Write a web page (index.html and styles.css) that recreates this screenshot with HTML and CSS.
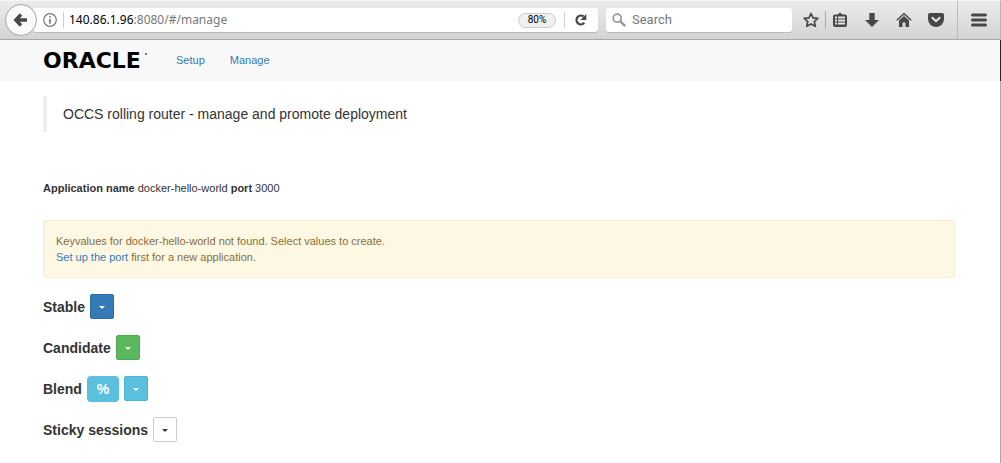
FILE: index.html
```html
<!DOCTYPE html>
<html lang="en">
<head>
<meta charset="utf-8">
<title>OCCS rolling router</title>
<link rel="stylesheet" href="styles.css">
</head>
<body>
<div class="toolbar">
  <button class="back" aria-label="Back"><svg width="16" height="16" viewBox="0 0 16 16"><path d="M8 2.5 2.8 8 8 13.5M3 8h11" fill="none" stroke="#484848" stroke-width="3.4"/></svg></button>
  <div class="address">
    <button class="plain info" aria-label="Site information"><svg width="14" height="14" viewBox="0 0 14 14" fill="none" stroke="#777"><circle cx="7" cy="7" r="6.3" stroke-width="1.2"/><path d="M7 6v4.7M7 3.2v1.6" stroke-width="1.6"/></svg></button>
    <span class="rule"></span>
    <div class="url" role="textbox" aria-label="Address" contenteditable="true" spellcheck="false"><b>140.86.1.96</b>:8080/#/manage</div>
    <button class="zoom">80%</button>
    <span class="rule"></span>
    <button class="plain reload" aria-label="Reload"><svg width="14" height="14" viewBox="0 0 14 14"><path d="M10.3 9.8A4.4 4.4 0 1 1 9.6 3.5" fill="none" stroke="#484848" stroke-width="2.3"/><path d="M12.3 1v6H6.4z" fill="#484848"/></svg></button>
  </div>
  <label class="search">
    <svg width="14" height="14" viewBox="0 0 14 14" fill="none" stroke="#999"><circle cx="5.2" cy="5.2" r="4" stroke-width="1.8"/><path d="m8.2 8.2 5 5" stroke-width="2.4"/></svg>
    <input type="text" placeholder="Search" aria-label="Search">
  </label>
  <div class="tools">
    <button class="plain star" aria-label="Bookmark"><svg width="16" height="16" viewBox="0 0 16 16"><path d="m8 1.5 2 4.4 4.8.5-3.5 3.2 1 4.7L8 12l-4.3 2.3 1-4.700L1.200 6.400 6 5.900z" fill="none" stroke="#484848" stroke-width="1.700" stroke-linejoin="round"/></svg></button>
    <span class="rule"></span>
    <button class="plain" aria-label="Bookmarks list"><svg width="16" height="16" viewBox="0 0 16 16"><path d="M3 2.500h2.500L8 .5l2.500 2H13q2 0 2 2V13q0 2-2 2H3q-2 0-2-2V4.500q0-2 2-2z" fill="#484848"/><path d="M3 5.500h2M6 5.500h7M3 8.500h2M6 8.500h7M3 11.500h2M6 11.500h7" stroke="#e4e4e4" stroke-width="1.800"/></svg></button>
    <button class="plain" aria-label="Downloads"><svg width="16" height="16" viewBox="0 0 16 16"><path d="M5.300 1h5.400v7H15l-7 7-7-7h4.300z" fill="#484848"/></svg></button>
    <button class="plain" aria-label="Home"><svg width="16" height="16" viewBox="0 0 16 16"><path d="M.8 8.300 8 1.800l7.200 6.500" fill="none" stroke="#484848" stroke-width="1.500"/><path d="M3 8.500 8 4l5 4.500V15H9.500v-4.500h-3V15H3z" fill="#484848"/></svg></button>
    <button class="plain" aria-label="Pocket"><svg width="16" height="16" viewBox="0 0 16 16"><path d="M2 1h12q2 0 2 2v4a8 8 0 0 1-16 0V3q0-2 2-2z" fill="#484848"/><path d="m4.400 5.800 3.600 3.500 3.600-3.500" fill="none" stroke="#e4e4e4" stroke-width="2" stroke-linecap="round" stroke-linejoin="round"/></svg></button>
  </div>
  <button class="plain menu" aria-label="Menu"><svg width="16" height="14" viewBox="0 0 16 14"><path d="M1.500 2h13M1.500 7h13M1.500 12h13" stroke="#484848" stroke-width="3" stroke-linecap="round"/></svg></button>
</div>
<nav class="nav">
  <svg class="logo" width="107" height="32" viewBox="0 0 107 32" role="img" aria-label="Oracle"><text class="wordmark" x="0" y="23">ORACLE</text><circle cx="103" cy="9" r="1" fill="#555"/></svg>
  <a href="#/setup">Setup</a>
  <a href="#/manage">Manage</a>
</nav>
<main class="page">
  <blockquote class="lead">OCCS rolling router - manage and promote deployment</blockquote>
  <p class="app"><b>Application name</b> docker-hello-world <b>port</b> 3000</p>
  <div class="alert">Keyvalues for docker-hello-world not found. Select values to create.<br><a href="#/setup">Set up the port</a> first for a new application.</div>
  <div class="settings">
    <div class="row"><h4>Stable</h4><button class="drop primary" aria-label="Stable options"><span class="caret"></span></button></div>
    <div class="row"><h4>Candidate</h4><button class="drop success" aria-label="Candidate options"><span class="caret"></span></button></div>
    <div class="row"><h4>Blend</h4><span class="percent">%</span><button class="drop cyan" aria-label="Blend options"><span class="caret"></span></button></div>
    <div class="row"><h4>Sticky sessions</h4><button class="drop" aria-label="Sticky sessions options"><span class="caret"></span></button></div>
  </div>
</main>
</body>
</html>
```
FILE: styles.css
```css
* { box-sizing: border-box; }
body {
  margin: 0;
  min-height: 100vh;
  display: flex;
  flex-direction: column;
  background: #fff;
  color: #333;
  font: 11px/16px "Liberation Sans", Arial, sans-serif;
}
a { color: #337ab7; text-decoration: none; }
button { font: inherit; padding: 0; cursor: pointer; }
svg { display: block; flex: none; }

.toolbar {
  display: flex;
  align-items: center;
  height: 40px;
  padding-left: 5px;
  background: linear-gradient(#ececec, #d3d3d3);
  border-top: 1px solid #f5f5f5;
  border-bottom: 1px solid #a9a9a9;
  border-right: 1px solid #b5b5b5;
}
.plain {
  display: flex;
  align-items: center;
  justify-content: center;
  border: 0;
  background: none;
}
.back {
  position: relative;
  display: flex;
  align-items: center;
  justify-content: center;
  width: 32px;
  height: 32px;
  border: 1px solid #a5a5a5;
  border-radius: 50%;
  background: #fafafa;
}
.address, .search {
  display: flex;
  align-items: center;
  height: 24px;
  background: #fff;
  border-radius: 3px;
  box-shadow: 0 1px 0 #bbb;
}
.address { flex: 1; margin-left: -4px; padding: 0 10px; }
.info { margin-right: 6px; }
.address .rule { height: 16px; background: #d0d0d0; }
.rule { width: 1px; height: 18px; background: #aaa; }
.url {
  flex: 1;
  padding-left: 5px;
  outline: 0;
  white-space: nowrap;
  color: #777;
  font: 12px/16px "Noto Sans", sans-serif;
}
.url b { color: #000; font-weight: 400; }
.zoom {
  width: 38px;
  height: 15px;
  margin-right: 8px;
  border: 1px solid #ccc;
  border-radius: 8px;
  background: #f0f0f0;
  color: #000;
  font: 10px/12px Roboto, sans-serif;
}
.reload { margin-left: 9px; }
.search { width: 186px; margin-left: 8px; padding: 0 6px; gap: 6px; }
.search input {
  width: 100%;
  min-width: 0;
  padding: 0;
  border: 0;
  outline: 0;
  background: none;
  font: 13px/16px Roboto, sans-serif;
}
.search input::placeholder { color: #777; opacity: 1; }
.tools { display: flex; align-items: center; gap: 16px; padding: 0 13px 0 11px; }
.tools .rule { margin: 0 -10px; }
.menu {
  align-self: stretch;
  width: 43px;
  border-left: 1px solid #bbb;
}

.nav {
  display: flex;
  align-items: center;
  height: 41px;
  padding-left: 43px;
  background: #f8f8f8;
  border-right: 1px solid #222;
}
.nav a { margin-right: 25px; line-height: 14px; padding-bottom: 2px; }
.nav .logo { margin-right: 26px; }
.wordmark { font: 700 22px "DejaVu Sans", sans-serif; fill: #000; }

.page {
  flex: 1;
  padding: 15px 45px 20px 43px;
  border-right: 1px solid #aaa;
}
.lead {
  margin: 0;
  padding: 8px 16px;
  border-left: 4px solid #eee;
  font-size: 14px;
  line-height: 20px;
}
.app { margin: 48px 0 24px; }
.alert {
  padding: 12px;
  border: 1px solid #faebcc;
  border-radius: 3px;
  background: #fcf8e3;
  color: #8a6d3b;
}
.settings { display: grid; gap: 16px; margin-top: 16px; }
.row { display: flex; align-items: center; gap: 5px; height: 25px; }
h4 { margin: 0; font-size: 14px; line-height: 16px; }
.drop {
  display: flex;
  align-items: center;
  justify-content: center;
  width: 24px;
  height: 25px;
  border: 1px solid #ccc;
  border-radius: 2px;
  background: #fff;
  color: #333;
}
.primary { background: #337ab7; border-color: #2e6da4; color: #fff; }
.success { background: #5cb85c; border-color: #4cae4c; color: #fff; }
.cyan { background: #5bc0de; border-color: #46b8da; color: #fff; }
.caret {
  margin-top: 2px;
  border-top: 3px solid;
  border-left: 3px solid transparent;
  border-right: 3px solid transparent;
}
.percent {
  width: 32px;
  border-radius: 4px;
  background: #5bc0de;
  color: #fff;
  font-size: 14px;
  font-weight: 700;
  line-height: 26px;
  text-align: center;
}
```
